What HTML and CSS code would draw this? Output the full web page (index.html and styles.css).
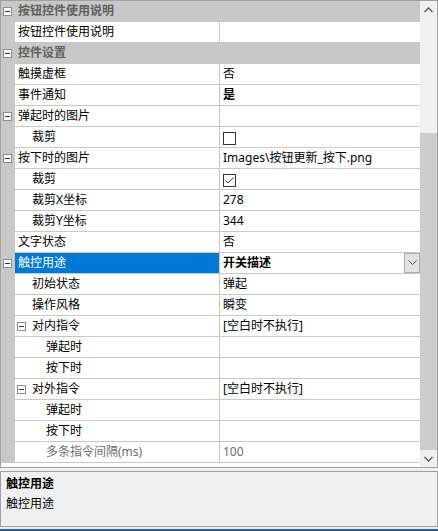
FILE: index.html
```html
<!DOCTYPE html>
<html lang="zh-CN">
<head>
<meta charset="utf-8">
<title>属性</title>
<link rel="stylesheet" href="styles.css">
</head>
<body>
<div class="grid">
  <div class="rows">
    <div class="row cat"><div class="gutter"><span class="tog"></span></div><div class="cells"><div class="name">按钮控件使用说明</div></div></div>
    <div class="row"><div class="gutter"></div><div class="cells"><div class="name">按钮控件使用说明</div><div class="value"></div></div></div>
    <div class="row cat"><div class="gutter"><span class="tog"></span></div><div class="cells"><div class="name">控件设置</div></div></div>
    <div class="row"><div class="gutter"></div><div class="cells"><div class="name">触摸虚框</div><div class="value">否</div></div></div>
    <div class="row"><div class="gutter"></div><div class="cells"><div class="name">事件通知</div><div class="value bold">是</div></div></div>
    <div class="row"><div class="gutter"><span class="tog"></span></div><div class="cells"><div class="name">弹起时的图片</div><div class="value"></div></div></div>
    <div class="row"><div class="gutter"></div><div class="cells"><div class="name l2">裁剪</div><div class="value"><span class="chk"></span></div></div></div>
    <div class="row"><div class="gutter"><span class="tog"></span></div><div class="cells"><div class="name">按下时的图片</div><div class="value">Images\按钮更新_按下.png</div></div></div>
    <div class="row"><div class="gutter"></div><div class="cells"><div class="name l2">裁剪</div><div class="value"><span class="chk"><svg width="11" height="11" viewBox="0 0 11 11"><polyline points="1.5,5.5 4,8 9.5,2.5" fill="none" stroke="#333" stroke-width="1"/></svg></span></div></div></div>
    <div class="row"><div class="gutter"></div><div class="cells"><div class="name l2">裁剪X坐标</div><div class="value">278</div></div></div>
    <div class="row"><div class="gutter"></div><div class="cells"><div class="name l2">裁剪Y坐标</div><div class="value">344</div></div></div>
    <div class="row"><div class="gutter"></div><div class="cells"><div class="name">文字状态</div><div class="value">否</div></div></div>
    <div class="row sel"><div class="gutter"><span class="tog"></span></div><div class="cells"><div class="name">触控用途</div><div class="value bold"><span class="vtext">开关描述</span><span class="dd"><svg width="9" height="6" viewBox="0 0 9 6"><polyline points="0.5,0.5 4.5,4.5 8.5,0.5" fill="none" stroke="#555" stroke-width="1"/></svg></span></div></div></div>
    <div class="row"><div class="gutter"></div><div class="cells"><div class="name l2">初始状态</div><div class="value">弹起</div></div></div>
    <div class="row"><div class="gutter"></div><div class="cells"><div class="name l2">操作风格</div><div class="value">瞬变</div></div></div>
    <div class="row"><div class="gutter"></div><div class="cells"><div class="name l1t"><span class="tog"></span>对内指令</div><div class="value">[空白时不执行]</div></div></div>
    <div class="row"><div class="gutter"></div><div class="cells"><div class="name l3">弹起时</div><div class="value"></div></div></div>
    <div class="row"><div class="gutter"></div><div class="cells"><div class="name l3">按下时</div><div class="value"></div></div></div>
    <div class="row"><div class="gutter"></div><div class="cells"><div class="name l1t"><span class="tog"></span>对外指令</div><div class="value">[空白时不执行]</div></div></div>
    <div class="row"><div class="gutter"></div><div class="cells"><div class="name l3">弹起时</div><div class="value"></div></div></div>
    <div class="row"><div class="gutter"></div><div class="cells"><div class="name l3">按下时</div><div class="value"></div></div></div>
    <div class="row ro"><div class="gutter"></div><div class="cells"><div class="name l3">多条指令间隔(ms)</div><div class="value">100</div></div></div>
  </div>
  <div class="vscroll">
    <div class="sbtn"><svg width="9" height="6" viewBox="0 0 9 6"><polyline points="0.5,5 4.5,1 8.5,5" fill="none" stroke="#606060" stroke-width="1.5"/></svg></div>
    <div class="track-top"></div>
    <div class="thumb"></div>
    <div class="track-bot"></div>
    <div class="sbtn"><svg width="9" height="6" viewBox="0 0 9 6"><polyline points="0.5,1 4.5,5 8.5,1" fill="none" stroke="#606060" stroke-width="1.5"/></svg></div>
  </div>
</div>
<div class="desc">
  <div class="desc-title">触控用途</div>
  <div class="desc-text">触控用途</div>
</div>
<div class="bluebar"></div>
</body>
</html>
```

FILE: styles.css
```css
html, body {
  margin: 0;
  padding: 0;
}
body {
  width: 438px;
  height: 531px;
  background: #f0f0f0;
  font-family: "Noto Sans", "Noto Sans CJK SC", sans-serif;
  font-size: 12px;
  color: #000;
  overflow: hidden;
}
.grid {
  box-sizing: border-box;
  width: 438px;
  height: 468px;
  border: 1px solid #a0a0a0;
  display: flex;
  background: #fff;
}
.rows {
  flex: 1;
  display: flex;
  flex-direction: column;
  background: #fff;
}
.row {
  display: flex;
  height: 21px;
}
.gutter {
  width: 14px;
  flex: none;
  background: #c8c8c8;
  display: flex;
  align-items: center;
  padding-left: 2px;
  box-sizing: border-box;
}
.cells {
  flex: 1;
  display: flex;
  border-bottom: 1px solid #c8c8c8;
  height: 20px;
}
.name {
  width: 205px;
  flex: none;
  box-sizing: border-box;
  padding-left: 3px;
  border-right: 1px solid #c8c8c8;
  line-height: 20px;
  white-space: nowrap;
  overflow: hidden;
  display: flex;
  align-items: center;
}
.value {
  flex: 1;
  padding-left: 3px;
  line-height: 20px;
  white-space: nowrap;
  overflow: hidden;
  display: flex;
  align-items: center;
}
.bold { font-weight: bold; }
.l2 { padding-left: 17px; }
.l3 { padding-left: 31px; }
.l1t { padding-left: 2px; }
.l1t .tog { margin-right: 6px; }
.tog {
  box-sizing: border-box;
  width: 9px;
  height: 9px;
  border: 1px solid #8c8c8c;
  background: #fff;
  position: relative;
  flex: none;
  display: inline-block;
}
.tog::after {
  content: "";
  position: absolute;
  left: 1px;
  right: 1px;
  top: 3px;
  height: 1px;
  background: #333;
}
.cat .cells {
  background: #c8c8c8;
  border-bottom-color: #c8c8c8;
}
.cat .name {
  border-right: none;
  font-weight: bold;
  color: #606060;
  width: auto;
}
.sel .name {
  background: #0078d7;
  color: #fff;
}
.ro .name, .ro .value { color: #6d6d6d; }
.chk {
  box-sizing: border-box;
  width: 13px;
  height: 13px;
  border: 1px solid #333;
  background: #fff;
  display: flex;
  align-items: center;
  justify-content: center;
  margin-top: 2px;
}
.vtext { flex: 1; }
.dd {
  box-sizing: border-box;
  width: 16px;
  height: 20px;
  background: #e1e1e1;
  border: 1px solid #adadad;
  display: flex;
  align-items: center;
  justify-content: center;
  flex: none;
}
.vscroll {
  width: 17px;
  flex: none;
  display: flex;
  flex-direction: column;
  background: #f0f0f0;
}
.sbtn {
  height: 17px;
  display: flex;
  align-items: center;
  justify-content: center;
  flex: none;
}
.track-top { height: 115px; flex: none; }
.thumb { height: 317px; background: #cdcdcd; flex: none; }
.track-bot { flex: 1; }
.desc {
  box-sizing: border-box;
  margin-top: 3px;
  height: 56px;
  border: 1px solid #a0a0a0;
  background: #f0f0f0;
  padding: 4px 0 0 5px;
}
.desc-title {
  font-weight: bold;
  line-height: 16px;
}
.desc-text {
  line-height: 16px;
  margin-top: 4px;
}
.bluebar {
  margin-top: 2px;
  height: 2px;
  background: #2b579a;
}
```
